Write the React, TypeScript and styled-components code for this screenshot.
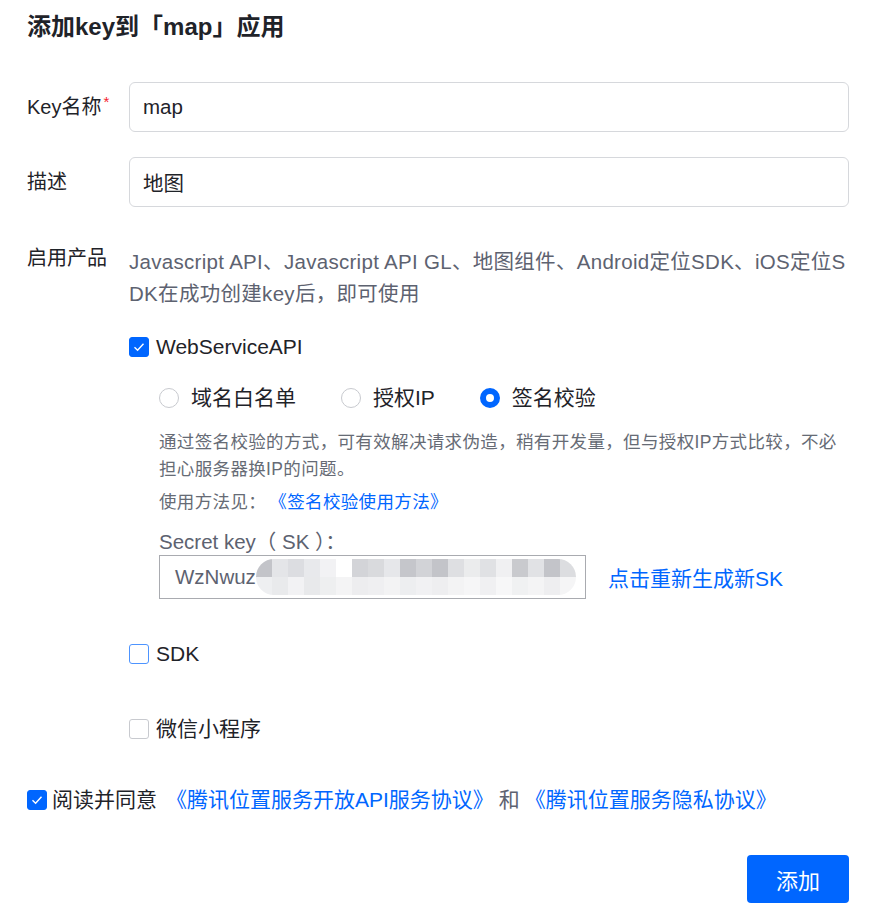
import styled, { createGlobalStyle } from 'styled-components'

const GlobalStyle = createGlobalStyle`
    body {
        margin: 0;
        background: #fff;
        font-family: "Liberation Sans", Arial, "Noto Sans CJK SC", sans-serif;
        color: #1f2329;
    }
`

const Page = styled.div`
    width: 878px;
    box-sizing: border-box;
    padding: 13px 29px 0 27px;
`

const Title = styled.h1`
    margin: 0 0 41px;
    font-size: 24px;
    line-height: 28px;
    font-weight: 700;
    color: #1f2329;
`

const Row = styled.div`
    display: flex;
    align-items: ${p => (p.$top ? 'flex-start' : 'center')};
    margin-bottom: ${p => p.$gap || 0}px;
`

const Label = styled.div`
    width: 102px;
    flex: none;
    font-size: 20px;
    line-height: 24px;
    color: #1f2329;
    position: relative;
`

const Star = styled.span`
    color: #f5222d;
    font-size: 15px;
    position: absolute;
    top: -5px;
    margin-left: 2px;
`

const TextInput = styled.div`
    flex: 1;
    height: 50px;
    box-sizing: border-box;
    border: 1px solid #d6d8dc;
    border-radius: 6px;
    padding: 0 13px;
    display: flex;
    align-items: center;
    font-size: 20.5px;
    color: #1f2329;
`

const Body = styled.div`
    flex: 1;
`

const ProductText = styled.div`
    font-size: 20.5px;
    line-height: 32px;
    color: #5d6270;
    word-break: break-all;
    letter-spacing: 0.3px;
`

const CheckRow = styled.label`
    display: flex;
    align-items: center;
    gap: 7px;
    font-size: 21px;
    line-height: 24px;
    color: #1f2329;
    margin-top: ${p => p.$mt || 0}px;
`

const Box = styled.span`
    width: 20px;
    height: 20px;
    box-sizing: border-box;
    border-radius: 3px;
    flex: none;
    display: flex;
    align-items: center;
    justify-content: center;
    background: ${p => (p.$checked ? '#0066ff' : '#fff')};
    border: 1px solid ${p => (p.$checked ? '#0066ff' : p.$focus ? '#4d94ff' : '#c8cacf')};
`

const Nested = styled.div`
    padding-left: 30px;
`

const RadioGroup = styled.div`
    display: flex;
    align-items: center;
    margin-top: 27px;
`

const RadioItem = styled.div`
    display: flex;
    align-items: center;
    gap: 12px;
    font-size: 21px;
    line-height: 24px;
    color: #1f2329;
    margin-right: ${p => p.$mr}px;
`

const Circle = styled.span`
    width: 20px;
    height: 20px;
    box-sizing: border-box;
    border-radius: 50%;
    border: ${p => (p.$checked ? '6px solid #0066ff' : '1px solid #c8cacf')};
    background: #fff;
`

const Desc = styled.div`
    margin-top: 19px;
    font-size: 17.5px;
    line-height: 27px;
    color: #666b75;
    letter-spacing: 0.35px;
`

const Usage = styled.div`
    margin-top: 6px;
    font-size: 17.5px;
    line-height: 27px;
    color: #666b75;
    letter-spacing: 0.35px;
`

const Link = styled.a`
    color: #0066ff;
    text-decoration: none;
    margin-left: ${p => p.$ml || 0}px;
`

const SkLabel = styled.div`
    margin-top: 13px;
    font-size: 20.5px;
    line-height: 26px;
    color: #5d6270;
`

const SkRow = styled.div`
    display: flex;
    align-items: center;
    gap: 22px;
    margin-top: 0;
`

const SkInput = styled.div`
    width: 427px;
    height: 44px;
    box-sizing: border-box;
    border: 1px solid #a9abb0;
    padding: 0 0 0 15px;
    display: flex;
    align-items: center;
    font-size: 20.5px;
    color: #5d6270;
    overflow: hidden;
`

const Mosaic = styled.div`
    display: grid;
    grid-template-columns: repeat(20, 16px);
    grid-template-rows: 18px 18px;
    border-radius: 18px;
    overflow: hidden;
    filter: blur(0.6px);
`

const Cell = styled.span`
    background: ${p => p.$c};
`

const SkLink = styled.a`
    color: #0066ff;
    text-decoration: none;
    font-size: 21px;
`

const Agree = styled.div`
    display: flex;
    align-items: center;
    gap: 5px;
    font-size: 21px;
    line-height: 24px;
    color: #1f2329;
    margin-top: 47px;
`

const Plain = styled.span`
    color: #5d6270;
`

const Footer = styled.div`
    display: flex;
    justify-content: flex-end;
    margin-top: 43px;
`

const Button = styled.button`
    width: 102px;
    height: 48px;
    border: none;
    border-radius: 4px;
    background: #0066ff;
    color: #fff;
    font-size: 22px;
    font-family: inherit;
`

const Check = () => (
    <svg width="12" height="10" viewBox="0 0 12 10">
        <path d="M1.5 5.2 L4.6 8.2 L10.5 1.8" fill="none" stroke="#fff" strokeWidth="1.4" />
    </svg>
)

const top = ['#c3c4c9', '#e4e5e8', '#dcdde1', '#e8e9ec', '#f2f2f4', '#ffffff', '#d3d4d8', '#d9dadd', '#e6e7ea', '#c5c6cb', '#d2d3d7', '#c3c4c9', '#dedfe2', '#ebeced', '#e0e1e4', '#f0f0f2', '#c9cace', '#e1e2e5', '#c3c4c9', '#dcdde0']
const bottom = ['#eeeff1', '#e9eaec', '#f2f2f4', '#e8e9eb', '#eeeff0', '#f4f4f5', '#ededef', '#efeff1', '#f3f3f4', '#edeef0', '#f1f1f3', '#eeeef0', '#f3f3f4', '#f6f6f7', '#f0f0f2', '#f7f7f8', '#f0f1f2', '#f4f4f5', '#eeeef0', '#f5f5f6']

export default function App() {
    return (
        <Page>
            <GlobalStyle />
            <Title>添加key到「map」应用</Title>

            <Row $gap={25}>
                <Label>Key名称<Star>*</Star></Label>
                <TextInput>map</TextInput>
            </Row>
            <Row $gap={39}>
                <Label>描述</Label>
                <TextInput>地图</TextInput>
            </Row>

            <Row $top>
                <Label>启用产品</Label>
                <Body>
                    <ProductText>
                        Javascript API、Javascript API GL、地图组件、Android定位SDK、iOS定位SDK在成功创建key后，即可使用
                    </ProductText>

                    <CheckRow $mt={25}>
                        <Box $checked><Check /></Box>
                        WebServiceAPI
                    </CheckRow>

                    <Nested>
                        <RadioGroup>
                            <RadioItem $mr={45}><Circle />域名白名单</RadioItem>
                            <RadioItem $mr={45}><Circle />授权IP</RadioItem>
                            <RadioItem $mr={0}><Circle $checked />签名校验</RadioItem>
                        </RadioGroup>
                        <Desc>
                            通过签名校验的方式，可有效解决请求伪造，稍有开发量，但与授权IP方式比较，不必担心服务器换IP的问题。
                        </Desc>
                        <Usage>
                            使用方法见：<Link $ml={12}>《签名校验使用方法》</Link>
                        </Usage>
                        <SkLabel>Secret key（ SK ）：</SkLabel>
                        <SkRow>
                            <SkInput>
                                WzNwuz
                                <Mosaic>
                                    {top.map((c, i) => <Cell key={'t' + i} $c={c} />)}
                                    {bottom.map((c, i) => <Cell key={'b' + i} $c={c} />)}
                                </Mosaic>
                            </SkInput>
                            <SkLink>点击重新生成新SK</SkLink>
                        </SkRow>
                    </Nested>

                    <CheckRow $mt={43}>
                        <Box $focus />
                        SDK
                    </CheckRow>
                    <CheckRow $mt={51}>
                        <Box />
                        微信小程序
                    </CheckRow>
                </Body>
            </Row>

            <Agree>
                <Box $checked><Check /></Box>
                阅读并同意
                <Link $ml={4}>《腾讯位置服务开放API服务协议》</Link>
                <Plain>和</Plain>
                <Link>《腾讯位置服务隐私协议》</Link>
            </Agree>

            <Footer>
                <Button>添加</Button>
            </Footer>
        </Page>
    )
}
